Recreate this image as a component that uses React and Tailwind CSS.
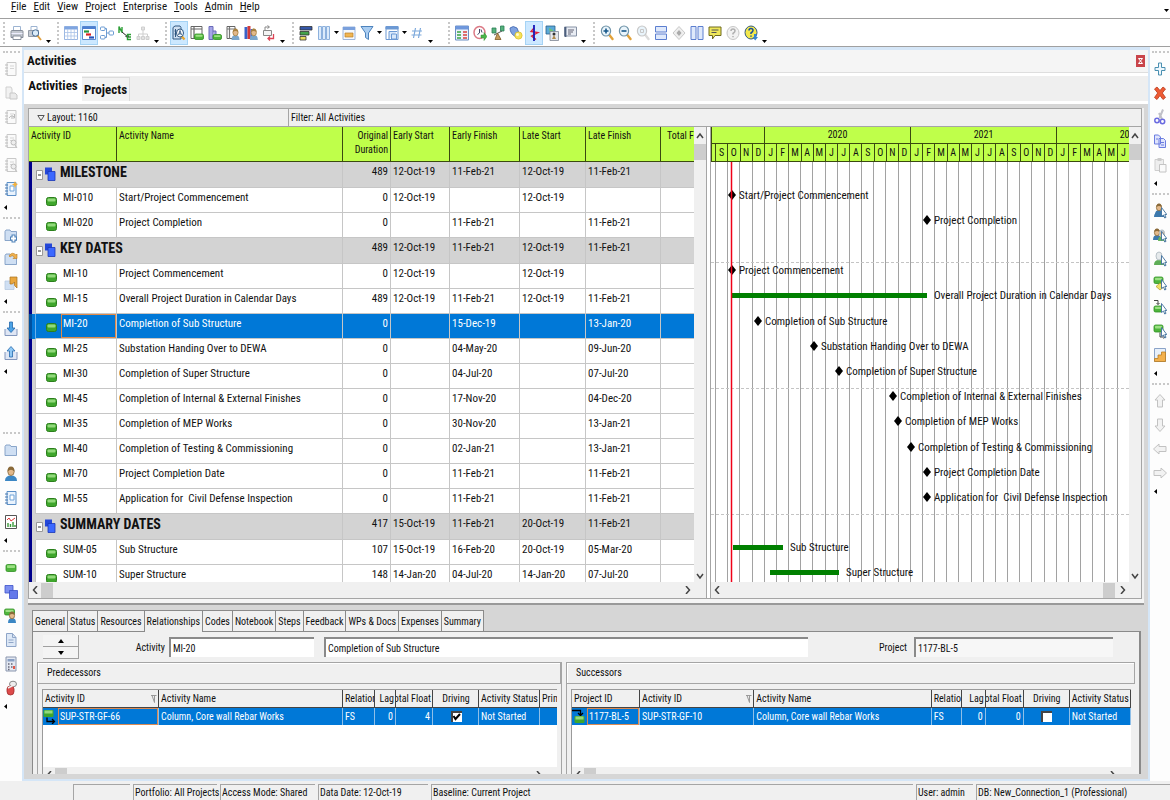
import React from "react";

/* ---------- icons, drawn on a 14x16 grid ---------- */
const page = (
  <g>
    <path d="M3 1.5h9v13H3z" fill="#fafafa" stroke="#c9c9c9" />
    <path d="M1 4h3M1 7h3M1 10h3M1 13h3" stroke="#bdbdbd" />
    <path d="M6 5h4M6 7.500h4" stroke="#d5d5d5" />
  </g>
);
const bluePage = (
  <g>
    <path d="M3 1.500h9v13H3z" fill="#eaf3fd" stroke="#5b8fc7" />
    <path d="M1 4h3M1 7h3M1 10h3M1 13h3" stroke="#4678b0" />
    <path d="M6 5h4v5H6z" fill="#fff" stroke="#6fa3d8" />
  </g>
);
const person = (x, y, c, hair = "#8a6a3a") => (
  <g>
    <path d={`M${x - 4} ${y + 10}q0-5 4-5t4 5z`} fill={c} />
    <ellipse cx={x} cy={y + 2.5} rx="2.600" ry="3.300" fill="#e3b98b" stroke={hair} strokeWidth=".8" />
    <path d={`M${x - 2.6} ${y + 2}q0-3.500 2.600-3.500t2.600 3.500q-2.600-2-5.200 0`} fill={hair} />
  </g>
);
const green = (x, y, w, h) => (
  <g>
    <rect x={x} y={y} width={w} height={h} rx="1.500" fill="#4fb53c" stroke="#2f8f22" strokeWidth=".8" />
    <rect x={x + 1} y={y + 0.8} width={w - 2} height={h / 2 - 0.8} rx=".8" fill="#9be083" />
  </g>
);
const cursor = <path d="M8.500 4.500v9l2-1.500 1.200 3 1.300-.6-1.200-2.900h2z" fill="#fff" stroke="#3f6f9c" strokeWidth=".9" />;
const folder = <path d="M1 4.500l1-1.500h4l1 1.500h5.500v9H1z" fill="#cfdff3" stroke="#7f9dc4" strokeWidth=".9" />;
const magnifier = (c) => (
  <g>
    <path d="M9 9.500l3.500 4.500" stroke={c === "#c8c8c8" ? "#dcdcdc" : "#e2a23a"} strokeWidth="2.400" strokeLinecap="round" />
    <ellipse cx="6" cy="6" rx="4.600" ry="5" fill="#e9f4fb" stroke={c} strokeWidth="1.200" />
  </g>
);
const bigArrow = (r) => (
  <path d="M7 1.500l5 5.500H9.500v7h-5V7H2z" fill="#f2f2f2" stroke="#c2c2c2" transform={`rotate(${r} 7 8)`} />
);

const ICONS = {
  print: (
    <g>
      <path d="M3.500 6V1.500h7V6" fill="#fff" stroke="#9db4d2" />
      <path d="M1 6.500q0-1 1-1h10q1 0 1 1v6H1z" fill="#c3c8d0" stroke="#7d8591" strokeWidth=".9" />
      <path d="M1.500 8.500h11" stroke="#eef" />
      <path d="M3 11h8v3.500H3z" fill="#fff" stroke="#7e8794" strokeWidth=".9" />
    </g>
  ),
  preview: (
    <g>
      <path d="M3 5V1.500h6V5" fill="#fff" stroke="#9db4d2" />
      <path d="M.5 5.500h10v6H.5z" fill="#c6cbd3" stroke="#8a929e" strokeWidth=".9" />
      <path d="M9 10l4 5" stroke="#e0a040" strokeWidth="2" />
      <circle cx="7.500" cy="8" r="3.200" fill="#dcecf8" stroke="#4d6f94" />
    </g>
  ),
  sheet: (
    <g>
      <path d="M.5 1.500h13v13H.5z" fill="#fff" stroke="#9bb7e2" />
      <path d="M.5 1.500h13v3H.5z" fill="#7fa5e0" />
      <path d="M.5 7.500h13M.5 11h13M3.700 4v11M7 4v11M10.300 4v11" stroke="#a9c3e9" strokeWidth=".8" />
    </g>
  ),
  gantt: (
    <g>
      <path d="M.5 1.500h13v13H.5z" fill="#fff" stroke="#5d8bd0" />
      <path d="M.5 1.500h13v2.500H.5z" fill="#4b7fd0" />
      <path d="M2 6.500h5" stroke="#27963c" strokeWidth="2.200" />
      <path d="M4 9.500h5" stroke="#d22" strokeWidth="2.200" />
      <path d="M7 12.500h5" stroke="#2753b8" strokeWidth="2.200" />
    </g>
  ),
  network: (
    <g fill="#fff" stroke="#6b9bd2">
      <path d="M4.500 3.500h2v9h-2M6.500 8h2.500" fill="none" />
      <rect x=".5" y="2" width="4.500" height="3.500" rx="1" />
      <rect x="9" y="6" width="4.500" height="4" rx="1" />
      <rect x=".5" y="10.500" width="4.500" height="3.500" rx="1" />
    </g>
  ),
  trace: (
    <g fill="none">
      <path d="M1 8V1.500l3 6V2" stroke="#2c9e35" strokeWidth="1.400" />
      <path d="M4 7l6 5M7.500 11.500l3 .8-.8-3" stroke="#222" />
      <path d="M13 9.500H9.500v5H13M13 12h-2" stroke="#2c9e35" strokeWidth="1.400" />
    </g>
  ),
  tree: (
    <g fill="#e2e2e2" stroke="#cfcfcf">
      <path d="M7 5v4M2.500 12V9h9v3M7 9v3" fill="none" />
      <path d="M5.500 2h3v3h-3zM1 11.500h3v3H1zM5.500 11.500h3v3h-3zM10 11.500h3v3h-3z" />
    </g>
  ),
  details: (
    <g>
      <path d="M1 2.500l2-1.500h5l1 1.500V14H1z" fill="#cfe0f2" stroke="#2f5680" />
      <path d="M3.500 4v8M2.500 6h2M2.500 9h2" stroke="#2f5680" />
      <path d="M9.500 11l3 3.500" stroke="#e9a52c" strokeWidth="2.200" />
      <ellipse cx="8" cy="8" rx="3.500" ry="4" fill="#fff" stroke="#2f5680" />
      <path d="M6.500 10L8 5.500l1.500 4.500M7 8.800h2" stroke="#2f5680" fill="none" strokeWidth=".9" />
    </g>
  ),
  usage: (
    <g>
      <path d="M1 1.500h11v12H1z" fill="#fff" stroke="#666" />
      <path d="M1 4h11M4 2v12" stroke="#666" strokeWidth="1.200" />
      {green(4.5, 9, 9, 5.5)}
    </g>
  ),
  profile: (
    <g>
      <path d="M1 1.500v13h4V1.500zM5 6h3v8" fill="#a5a5e8" stroke="#6a6ab8" />
      {green(5, 9.5, 8.500, 5)}
    </g>
  ),
  resUsage: (
    <g>
      <path d="M1 1.500h8v12H1z" fill="#fff" stroke="#666" />
      <path d="M1 4h9M3.500 2v12" stroke="#777" strokeWidth="1.200" />
      {person(9.5, 5, "#7aa6cc", "#a8813f")}
    </g>
  ),
  resProfile: (
    <g>
      <path d="M.5 2h3v12h-3z" fill="#3a62c8" />
      <path d="M3.500 1h3v13h-3z" fill="#d33a3a" />
      <path d="M6.500 4h2v10h-2z" fill="#3a62c8" />
      {person(9.8, 5, "#7aa6cc", "#a8813f")}
    </g>
  ),
  relation: (
    <g fill="none">
      <path d="M1.500 5.500h8v5h-8z" fill="#f4f4f4" stroke="#888" />
      <path d="M3 5.500V2h4M5.500 .5L7.500 2 5.500 3.500" stroke="#888" />
      <path d="M6 13.500h5.500V9M8 11.500l-2 2 2 2" stroke="#dd4455" strokeWidth="1.300" />
    </g>
  ),
  bars: (
    <g stroke="#333" strokeWidth=".8">
      <path d="M1 1.500h12v3.500H1z" fill="#3557a8" />
      <path d="M1 6.500h9V10H1z" fill="#45a34a" />
      <path d="M1 11.500h6V15H1z" fill="#e8dc5a" />
    </g>
  ),
  columns: (
    <g fill="#dcebfb" stroke="#8db1dd">
      <path d="M1.500 1.500h3v13h-3zM5.500 1.500h3v13h-3zM9.500 1.500h3v13h-3z" />
    </g>
  ),
  timescale: (
    <g>
      <path d="M1 2h12v12.500H1z" fill="#f4f8fd" stroke="#9db6dc" />
      <path d="M1 2h12v3H1z" fill="#7aa0dc" />
      <path d="M3 8h8v4H3z" fill="#f0b552" stroke="#b98028" strokeWidth=".7" />
    </g>
  ),
  filter: <path d="M1 1.500h12L8.500 8v6.500l-3-2V8z" fill="#a9cdf2" stroke="#4d83bd" />,
  group: (
    <g fill="#fff" stroke="#6c99d4">
      <path d="M1 1.500h12v13H1z" />
      <path d="M1 1.500h12v2.500H1z" fill="#6c99d4" />
      <path d="M4 14V6.500h8M6.500 9h5v5h-5z" fill="#d9e8fa" />
    </g>
  ),
  hash: <path d="M5.500 3l-2 10M10.500 3l-2 10M2 6h10M1.500 10h10" stroke="#7da9dc" strokeWidth="1.200" />,
  spreadsheet: (
    <g>
      <path d="M.5 1h13v14H.5z" fill="#edf3fb" stroke="#6b8fc4" />
      <path d="M.5 1h13v3.500H.5z" fill="#6e97dc" />
      <path d="M2 7h4M2 10h4M2 13h4" stroke="#38a545" strokeWidth="1.600" />
      <path d="M8 7h4M8 10h4M8 13h4" stroke="#d94242" strokeWidth="1.600" />
    </g>
  ),
  schedule: (
    <g>
      <ellipse cx="6.500" cy="7.500" rx="5.500" ry="6" fill="#fff" stroke="#dc7a86" strokeWidth="1.500" />
      <path d="M6.500 4v4l-2 1.500M8 4.500l1 3" stroke="#446" fill="none" />
      <path d="M8 10h3V7.500l3 4-3 4V13H8z" fill="#4bb54a" stroke="#2e8a2e" strokeWidth=".5" />
    </g>
  ),
  level: (
    <g>
      <path d="M1 3h4v5H1zM9.500 1h3.500v5H9.500z" fill="#55b27c" stroke="#2b7d55" strokeWidth=".8" />
      <path d="M3 10l8-4" stroke="#555" />
      <path d="M6.500 8L4 14.500h6z" fill="#c79a5a" stroke="#7f5b26" strokeWidth=".8" />
    </g>
  ),
  progress: (
    <g>
      <path d="M1 3q3-3 7 0l2 5-3 4Q1 9 1 3z" fill="#7ea2e0" stroke="#3c62ac" strokeWidth=".8" />
      <circle cx="9.500" cy="10.500" r="3.600" fill="#f7e25a" stroke="#d9c12b" strokeWidth=".8" />
      <circle cx="8.500" cy="9.500" r="1.500" fill="#fffbd0" />
    </g>
  ),
  progressLine: (
    <g fill="none">
      <path d="M7 3L4 6.500l7 1L4.500 11l4.500 3.500" stroke="#e0203a" strokeWidth="1.300" />
      <path d="M7 0v16" stroke="#1616b8" strokeWidth="1.800" />
    </g>
  ),
  apply: (
    <g>
      <path d="M1 1h9v8H1z" fill="#5aa9d8" stroke="#28608c" strokeWidth=".8" />
      <path d="M4 3l5 3-4 2z" fill="#72c36a" />
      <path d="M5 6.500h8.500v9H5z" fill="#e4e7ec" stroke="#7d8794" strokeWidth=".8" />
      <circle cx="9" cy="9" r="1.500" fill="#333" />
      <path d="M7 14l2-4 2 4z" fill="#b18a4c" />
    </g>
  ),
  summarize: (
    <g>
      <path d="M1.500 2h12v9h-12z" fill="#e8ecf3" stroke="#8792a5" />
      <path d="M2.500 2v10" stroke="#4d5f7d" strokeWidth="1.800" />
      <path d="M5 5h6M5 7h5M5 9h3" stroke="#556" strokeWidth=".9" />
    </g>
  ),
  zoomIn: <g>{magnifier("#6f93a8")}<path d="M3.500 6h5M6 3.500v5" stroke="#15578a" strokeWidth="1.600" /></g>,
  zoomOut: <g>{magnifier("#6f93a8")}<path d="M3.500 6h5" stroke="#15578a" strokeWidth="1.600" /></g>,
  zoomFit: <g>{magnifier("#c8c8c8")}<path d="M4.500 4.500h3v3h-3z" fill="none" stroke="#c8c8c8" /></g>,
  splitH: <g fill="#dfe9fb" stroke="#5c7fd0"><path d="M1.500 1.500h11V7h-11zM1.500 9h11v5.500h-11z" /></g>,
  diamond: (
    <g>
      <path d="M7 1.500l6 6.500-6 6.500L1 8z" fill="#eee" stroke="#c8c8c8" />
      <path d="M7 5l2.500 3L7 11 4.500 8z" fill="#aaa" />
    </g>
  ),
  splitV: <g fill="#dfe9fb" stroke="#5c7fd0"><path d="M1 1.500h5v13H1zM8 1.500h5v13H8z" /></g>,
  comment: (
    <g>
      <path d="M1 2h12v8.500H7L4.500 14v-3.500H1z" fill="#efe75a" stroke="#6f6a1e" />
      <path d="M3.500 5h7M3.500 7.500h5" stroke="#555" />
    </g>
  ),
  help: (
    <g fill="none">
      <ellipse cx="7" cy="8" rx="6" ry="6.500" fill="#f2f2f2" stroke="#c6c6c6" />
      <path d="M5 6q0-2 2-2t2 2q0 1.200-2 2.500v1M7 11v1.300" stroke="#b0b0b0" strokeWidth="1.500" />
    </g>
  ),
  helpOn: (
    <g fill="none">
      <ellipse cx="7" cy="7.500" rx="6" ry="6.500" fill="#f3e84c" stroke="#345a7c" />
      <path d="M5 5.500q0-2 2-2t2 2q0 1.200-2 2.500v1M7 10.500v1.300" stroke="#1a4f9c" strokeWidth="1.500" />
      <path d="M10 9v3H8.500l2.700 3.500L14 12h-1.500V9z" fill="#3a85cf" />
    </g>
  ),
  page,
  pageGo: <g>{page}<path d="M5 9q3-4 5-1M10.500 5v4H7" fill="none" stroke="#bbb" /></g>,
  pageFind: <g>{page}<circle cx="9.500" cy="9.500" r="2.500" fill="#eee" stroke="#bbb" /><path d="M11 12l2 3" stroke="#bbb" /></g>,
  pageStack: <g><path d="M2 2h5l1 2v9H2z" fill="#f2f2f2" stroke="#d0d0d0" /><path d="M6 8h5l2 2v4H6z" fill="#eaeaea" stroke="#c8c8c8" /></g>,
  pageNew: <g>{bluePage}<path d="M11 0l1 2.500 2 .5-2 1.500L11 7l-1-2.500L8 3.500l2-1z" fill="#f4b13c" /></g>,
  bluePage,
  folder,
  folderNew: <g>{folder}<path d="M9.500 7.500v8M6 11.500h7" stroke="#4f83ba" strokeWidth="4" /><path d="M9.500 8.500v6M7 11.500h5" stroke="#fff" strokeWidth="1.800" /></g>,
  folderOpen: <g>{folder}<path d="M5 5q3-5 7-1l1-1v4.500H9l1.500-1.500Q8 3.500 6 6z" fill="#f1b04a" stroke="#b97a1e" strokeWidth=".6" /></g>,
  folderExit: <g><path d="M1 6h9v8.500H1z" fill="#cfdff3" stroke="#b5c8e0" strokeWidth=".8" /><path d="M6 2h7v11l-2.500-2.500V7L8.500 9H6z" fill="#e9a63e" stroke="#a8701c" strokeWidth=".7" /></g>,
  importIn: <g><path d="M1 8v6.500h12V8" fill="#dfe6f4" stroke="#8296bc" /><path d="M5.500 1h3v6h2.500L7 11.500 3 7h2.500z" fill="#4da3e6" stroke="#2468ac" strokeWidth=".8" /></g>,
  exportOut: <g><path d="M1 7v7.500h12V7" fill="#dfe6f4" stroke="#8296bc" /><path d="M5.500 12h3V6h2.500L7 1.500 3 6h2.500z" fill="#8fc8f5" stroke="#2468ac" strokeWidth=".8" /></g>,
  user: <g><path d="M1 15q0-5.500 6-5.500t6 5.500z" fill="#3c87c4" /><ellipse cx="7" cy="5.500" rx="3.200" ry="4" fill="#e3b98b" stroke="#8a6a3a" strokeWidth=".8" /><path d="M3.600 5.500Q3.500.5 7 .5t3.400 5Q7 2 3.600 5.500" fill="#8a6a3a" /></g>,
  chart: <g><path d="M1.500 1.500h11v13h-11z" fill="#fff" stroke="#555" /><path d="M3 6l2-2 2 3 4-3" fill="none" stroke="#d33" /><path d="M4 13V9M6.500 13v-3M9 13V8M11 13v-2" stroke="#3a9a3a" strokeWidth="1.400" /></g>,
  activity: green(2, 4.5, 10, 7),
  wbs: <g stroke="#3a50c8" strokeWidth=".8"><path d="M1 1.500h8V9H1z" fill="#7d8ff0" /><path d="M5.500 6.500h8v8h-8z" fill="#6378ea" /></g>,
  assign: <g>{green(0.5, 1, 10, 6)}{person(8, 5, "#3c87c4")}</g>,
  doc: <g><path d="M2.500 1.500h6l3.500 4v9H2.500z" fill="#dde8f6" stroke="#8ea5c8" /><path d="M8.500 1.500v4H12M4.500 8h5M4.500 10.500h5" fill="none" stroke="#90a6c8" /></g>,
  calc: <g><path d="M2 1h10v14H2z" fill="#e4e9f2" stroke="#8a96ae" /><path d="M3.500 3h7v2.500h-7z" fill="#8aa0c4" /><path d="M4 8h1.500M7 8h1.500M4 11h1.500M7 11h1.500M4 13.500h1.500" stroke="#667" strokeWidth="1.300" /><path d="M9 10h2v3H9z" fill="#e25a4a" /></g>,
  risk: <g><ellipse cx="9" cy="4" rx="3.500" ry="2.800" fill="#eee" stroke="#888" /><path d="M3 9q0-3 3.500-3T10 9v2.500Q10 15 6.500 15T3 11.500z" fill="#dd4b4b" stroke="#a02c2c" strokeWidth=".8" /><path d="M4 8l6-3" stroke="#eee" strokeWidth="1.400" /></g>,
  plus: <path d="M5.500 2h3v4.500H12v3H8.500V14h-3V9.500H2v-3h3.500z" fill="#eef7fd" stroke="#4a8fb0" />,
  remove: <path d="M4 2L7 5.500 10 2l2.500 2L9.300 8l3.200 4.500L10 14.500l-3-4-3 4-2.500-2L4.700 8 1.500 4z" fill="#ee5b34" stroke="#b8371a" strokeWidth=".8" />,
  cut: <g fill="none"><path d="M10 .5L6.500 9M6 4l3 6" stroke="#c0c0c8" strokeWidth="2" /><circle cx="4" cy="11.500" r="2.200" stroke="#6a6ae0" strokeWidth="1.500" /><circle cx="9.500" cy="12.500" r="2.200" stroke="#6a6ae0" strokeWidth="1.500" /></g>,
  copy: <g fill="#dfe4fc" stroke="#6b7de0"><path d="M1.500 2h4l2 2v7h-6zM6 5.500h4.500l2 2v7H6z" /><path d="M3 6h2M8 9.500h3M8 12h3" /></g>,
  paste: <g><path d="M2 2.500h8.500v11H2z" fill="#eee" stroke="#cfcfcf" /><path d="M4.500 1h4v3h-4z" fill="#ccc" /><path d="M6.500 7.500H13V15H6.500z" fill="#fafafa" stroke="#c4c4c4" /></g>,
  userPick: <g><path d="M1 14q0-5 5-5t6 5z" fill="#3c78ac" />{person(6, 2, "#3c78ac")}{cursor}</g>,
  usersPick: <g>{person(4, 3, "#3c78ac")}{person(9, 4, "#69b45c", "#b8c4cc")}{cursor}</g>,
  rolePick: <g><path d="M1 14q0-5 5-5t6 5z" fill="#5fae57" /><ellipse cx="6" cy="5" rx="3" ry="4" fill="#e6eaec" stroke="#b8c2c8" />{cursor}</g>,
  actPick: <g>{green(1, 2, 9, 6.5)}<path d="M7 8l4.500 3.500L7 15l-4-3.500z" fill="#f2e067" stroke="#b09a28" strokeWidth=".7" />{cursor}</g>,
  predPick: <g><path d="M1 1.500h4v4M3.500 4L5 5.500 6.500 4" fill="none" stroke="#444" />{green(1, 7, 8, 6)}{cursor}</g>,
  succPick: <g>{green(1, 2, 9, 7)}<path d="M7 9.500V14h5M10.500 12.500L12 14l-1.500 1.500" fill="none" stroke="#444" />{cursor}</g>,
  steps: <g><path d="M1.500 1.500h11v13h-11z" fill="#e8f0fa" stroke="#8aa3c8" /><path d="M1.500 14.500v-3h3.500V8h3.500V5h4v9.500z" fill="#f3b04c" stroke="#b97d22" strokeWidth=".8" /></g>,
  up: bigArrow(0),
  down: bigArrow(180),
  left: bigArrow(-90),
  right: bigArrow(90),
};

function Icon({ name }) {
  return (
    <svg width="14" height="16" viewBox="0 0 14 16" fill="none" aria-hidden="true">
      {ICONS[name]}
    </svg>
  );
}

function ToolButton({ name, active }) {
  return (
    <button
      type="button"
      aria-label={name}
      className={
        "flex h-6 w-[18px] shrink-0 items-center justify-center " +
        (active ? "border border-[#a5d3f5] bg-[#cce8ff]" : "")
      }
    >
      <Icon name={name} />
    </button>
  );
}

function Caret({ low }) {
  return (
    <button type="button" aria-label="More options" className={"flex h-5 w-2 shrink-0 justify-center " + (low ? "items-end" : "-ml-px items-center")}>
      <svg width="5" height="3" viewBox="0 0 5 3" aria-hidden="true"><path d="M0 0h5L2.500 3z" fill="#000" /></svg>
    </button>
  );
}

const TOOL_GROUPS = [
  { box: "w-[54px]", items: ["print", "preview", "..."] },
  { box: "w-[108px]", items: ["sheet", "*gantt", "network", "trace", "tree", "..."] },
  { box: "w-[127px]", items: ["*details", "usage", "profile", "resUsage", "resProfile", "relation", "..."] },
  { box: "w-[156px]", items: ["bars", "columns", "v", "timescale", "filter", "v", "group", "v", "hash", "..."] },
  { box: "w-[145px]", items: ["spreadsheet", "schedule", "level", "progress", "*progressLine", "apply", "summarize", "..."] },
  { box: "w-[180px]", items: ["zoomIn", "zoomOut", "zoomFit", "splitH", "diamond", "splitV", "comment", "help", "helpOn", "..."] },
];

function Toolbar() {
  return (
    <div className="flex h-7 shrink-0 items-center border-b border-[#a0a0a0] bg-white pl-[3px]">
      {TOOL_GROUPS.map((g, i) => (
        <div key={i} className={"flex shrink-0 items-center " + g.box}>
          <span className="mr-[3px] h-[22px] border-l-2 border-dotted border-[#c8c8c8]" />
          {g.items.map((n, k) =>
            n === "..." ? <Caret key={k} low /> : n === "v" ? <Caret key={k} /> : (
              <ToolButton key={k} name={n.replace("*", "")} active={n[0] === "*"} />
            )
          )}
        </div>
      ))}
    </div>
  );
}

function Rail({ groups, width }) {
  return (
    <div className={"flex shrink-0 flex-col bg-[#fdfdfd] " + width}>
      {groups.map((g, i) => (
        <div key={i} className={"flex flex-col items-center " + (g.gap ? "mt-[51px]" : "")}>
          <span className="flex h-[10px] w-[17px] items-center"><i className="w-full border-t-2 border-dotted border-[#c8c8c8]" /></span>
          {g.items.map((n, k) => (
            <button key={k} type="button" aria-label={n} className="flex h-6 w-[18px] items-center justify-center"><Icon name={n} /></button>
          ))}
          <span className="flex h-3 w-full items-center pl-1">
            <svg width="3" height="5" viewBox="0 0 3 5" aria-hidden="true"><path d="M3 0v5L0 2.500z" fill="#000" /></svg>
          </span>
        </div>
      ))}
    </div>
  );
}

const LEFT = [
  { items: ["page", "pageStack", "pageGo", "pageFind", "pageFind", "pageNew"] },
  { items: ["folderNew", "folderOpen", "folderExit"] },
  { items: ["importIn", "exportOut"] },
  { gap: true, items: ["folder", "user", "bluePage", "chart"] },
  { items: ["activity", "wbs", "assign", "doc", "calc", "risk"] },
];
const RIGHT = [
  { items: ["plus", "remove", "cut", "copy", "paste"] },
  { items: ["userPick", "usersPick", "rolePick", "actPick", "predPick", "succPick", "steps"] },
  { items: ["up", "down", "left", "right"] },
];

/* ---------- scroll bars ---------- */
const CHEVRON = { up: "M1 6l3-4 3 4", down: "M1 2l3 4 3-4", left: "M6 0L2.500 4 6 8", right: "M2 0l3.500 4L2 8" };
function ScrollArrow({ dir }) {
  return (
    <button type="button" aria-label={"Scroll " + dir} className="flex size-3 shrink-0 items-center justify-center">
      <svg width="8" height="8" viewBox="0 0 8 8" fill="none" stroke="#444" strokeWidth="1.500" aria-hidden="true"><path d={CHEVRON[dir]} /></svg>
    </button>
  );
}
function VScroll() {
  return (
    <div className="flex w-3 shrink-0 flex-col items-center bg-[#f0f0f0] pt-[3px]">
      <ScrollArrow dir="up" />
      <span className="mt-[2px] h-4 w-full bg-[#cdcdcd]" />
      <span className="flex-1" />
      <ScrollArrow dir="down" />
    </div>
  );
}
function HScroll({ end }) {
  return (
    <div className="flex h-4 shrink-0 items-center bg-[#f0f0f0] pr-3">
      <ScrollArrow dir="left" />
      {end && <span className="flex-1" />}
      <span className={"h-[15px] w-3 bg-[#cdcdcd] " + (end ? "mr-[2px]" : "")} />
      {!end && <span className="flex-1" />}
      <ScrollArrow dir="right" />
    </div>
  );
}

/* ---------- activity table ---------- */
const ROWS = [
  { group: "MILESTONE", v: ["489", "12-Oct-19", "11-Feb-21", "12-Oct-19", "11-Feb-21"] },
  { id: "MI-010", name: "Start/Project Commencement", v: ["0", "12-Oct-19", "", "12-Oct-19", ""] },
  { id: "MI-020", name: "Project Completion", v: ["0", "", "11-Feb-21", "", "11-Feb-21"] },
  { group: "KEY DATES", v: ["489", "12-Oct-19", "11-Feb-21", "12-Oct-19", "11-Feb-21"] },
  { id: "MI-10", name: "Project Commencement", v: ["0", "12-Oct-19", "", "12-Oct-19", ""] },
  { id: "MI-15", name: "Overall Project Duration in Calendar Days", v: ["489", "12-Oct-19", "11-Feb-21", "12-Oct-19", "11-Feb-21"] },
  { id: "MI-20", name: "Completion of Sub Structure", v: ["0", "", "15-Dec-19", "", "13-Jan-20"], sel: true },
  { id: "MI-25", name: "Substation Handing Over to DEWA", v: ["0", "", "04-May-20", "", "09-Jun-20"] },
  { id: "MI-30", name: "Completion of Super Structure", v: ["0", "", "04-Jul-20", "", "07-Jul-20"] },
  { id: "MI-45", name: "Completion of Internal & External Finishes", v: ["0", "", "17-Nov-20", "", "04-Dec-20"] },
  { id: "MI-35", name: "Completion of MEP Works", v: ["0", "", "30-Nov-20", "", "13-Jan-21"] },
  { id: "MI-40", name: "Completion of Testing & Commissioning", v: ["0", "", "02-Jan-21", "", "13-Jan-21"] },
  { id: "MI-70", name: "Project Completion Date", v: ["0", "", "11-Feb-21", "", "11-Feb-21"] },
  { id: "MI-55", name: "Application for  Civil Defense Inspection", v: ["0", "", "11-Feb-21", "", "11-Feb-21"] },
  { group: "SUMMARY DATES", v: ["417", "15-Oct-19", "11-Feb-21", "20-Oct-19", "11-Feb-21"] },
  { id: "SUM-05", name: "Sub Structure", v: ["107", "15-Oct-19", "16-Feb-20", "20-Oct-19", "05-Mar-20"] },
  { id: "SUM-10", name: "Super Structure", v: ["148", "14-Jan-20", "04-Jul-20", "14-Jan-20", "07-Jul-20"] },
];

function ActivityTable() {
  return (
    <table className="w-[707px] table-fixed border-separate border-spacing-0">
      <colgroup>
        <col className="w-[7px]" /><col className="w-[25px]" /><col className="w-[56px]" /><col className="w-[226px]" />
        <col className="w-[48px]" /><col className="w-[59px]" /><col className="w-[70px]" /><col className="w-[66px]" />
        <col className="w-[75px]" /><col className="w-[75px]" />
      </colgroup>
      <thead>
        <tr className="h-[35px] bg-[#bfff4a] align-top text-[10px] leading-[14px] [&>th]:border-b [&>th]:border-r [&>th]:border-[#3a4a10] [&>th]:px-[2px] [&>th]:pt-[2px] [&>th]:text-left [&>th]:font-normal">
          <th colSpan={3}>Activity ID</th>
          <th>Activity Name</th>
          <th><span className="block text-right">Original Duration</span></th>
          <th>Early Start</th>
          <th>Early Finish</th>
          <th>Late Start</th>
          <th>Late Finish</th>
          <th><span className="pl-1">Total Float</span></th>
        </tr>
      </thead>
      <tbody className="whitespace-nowrap text-[11px] leading-4">
        {ROWS.map((r) => {
          const line = "border-r border-b border-[#c6c6c6] ";
          const vals = r.v.map((t, i) => (
            <td key={i} className={line + "px-[2px] pb-[5px] " + (i === 0 ? "text-right" : "")}>{t}</td>
          ));
          if (r.group)
            return (
              <tr key={r.group} className="h-[26px] bg-[#d3d3d3]">
                <td className="border-l-[3px] border-[#00008b]" />
                <td colSpan={3} className={line + "overflow-hidden pb-[5px]"}>
                  <span className="flex items-center text-[14px] font-bold">
                    <span className="flex items-center pt-1">
                      <svg width="24" height="14" viewBox="0 0 24 14" aria-hidden="true">
                        <path d="M.5 3.500h6v9h-6z" fill="#fff" stroke="#999" />
                        <path d="M2 8h3" stroke="#333" />
                        <path d="M9 .5h7v7H9z" fill="#2447d8" />
                        <path d="M12 4.500h7v9h-7z" fill="#3b68ff" stroke="#1a36b5" strokeWidth=".8" />
                      </svg>
                    </span>
                    {r.group}
                  </span>
                </td>
                {vals}
                <td className={line} />
              </tr>
            );
          return (
            <tr key={r.id} className={"h-[25px] " + (r.sel ? "bg-[#0078d7] text-white" : "bg-white")}>
              <td className={"border-l-[3px] border-r " + (r.sel ? "border-l-[#00509f] border-r-[#6bb0ea]" : "border-l-[#00008b] border-r-[#c6c6c6] bg-[#d3d3d3]")} />
              <td className="border-b border-[#c6c6c6]">
                <svg className="ml-[10px] mt-[3px]" width="11" height="9" viewBox="0 0 11 9" aria-hidden="true">
                  <rect x=".5" y=".5" width="10" height="8" rx="2" fill="#3fa62c" stroke="#2b7f1c" />
                  <rect x="1.500" y="1.500" width="8" height="3" rx="1" fill="#93d97c" />
                </svg>
              </td>
              <td className={line + "px-[2px] pb-[5px] " + (r.sel ? "shadow-[inset_0_0_0_1px_#e08a4a]" : "")}>{r.id}</td>
              <td className={line + "overflow-hidden whitespace-pre px-[2px] pb-[5px]"}>{r.name}</td>
              {vals}
              <td className={line} />
            </tr>
          );
        })}
      </tbody>
    </table>
  );
}

/* ---------- gantt ---------- */
const YEARS = [
  { label: "", months: "SOND", first: true },
  { label: "2020", months: "JFMAMJJASOND" },
  { label: "2021", months: "JFMAMJJASOND" },
  { label: "2022", months: "JFMAMJJASOND" },
];
const MARKS = [
  [21, 33, "Start/Project Commencement"],
  [216, 58, "Project Completion"],
  [21, 108, "Project Commencement"],
  [47, 159, "Completion of Sub Structure"],
  [103, 184, "Substation Handing Over to DEWA"],
  [128, 209, "Completion of Super Structure"],
  [182, 234, "Completion of Internal & External Finishes"],
  [187, 259, "Completion of MEP Works"],
  [200, 285, "Completion of Testing & Commissioning"],
  [216, 310, "Project Completion Date"],
  [216, 335, "Application for  Civil Defense Inspection"],
];
const BARS = [
  [21, 216, 133, "Overall Project Duration in Calendar Days"],
  [22, 72, 385, "Sub Structure"],
  [59, 128, 410, "Super Structure"],
];

function Gantt() {
  return (
    <div className="min-w-0 flex-1 overflow-hidden bg-white">
      <div className="flex h-[35px] border-l border-b border-[#3a4a10] bg-[#bfff4a] text-[10px]">
        {YEARS.map((y, i) => (
          <div key={i} className={"flex shrink-0 flex-col border-r border-[#3a4a10] " + (y.first ? "w-[53px]" : "w-[146px]")}>
            <div className="h-[17px] border-b border-[#3a4a10] text-center leading-[15px]">{y.label}</div>
            <div className="flex flex-1">
              {y.first && <span className="w-1 shrink-0 border-r border-[#3a4a10]" />}
              {y.months.split("").map((m, k) => (
                <span key={k} className={"flex-1 text-center leading-[17px] " + (k < y.months.length - 1 ? "border-r border-[#3a4a10]" : "")}>{m}</span>
              ))}
            </div>
          </div>
        ))}
      </div>
      <svg width="560" height="430" className="max-w-none text-[11px]" fill="#111">
        {Array.from({ length: 46 }, (_, k) => (
          <path key={k} d={`M${Math.round(4 + k * 12.17) + 0.5} 0v430`} stroke="#a2a2a2" />
        ))}
        {[100, 226, 352].map((y) => (
          <path key={y} d={`M0 ${y}.5h560`} stroke="#c4c4c4" strokeDasharray="3 2" />
        ))}
        {MARKS.map(([x, y, t]) => (
          <g key={t}>
            <path d={`M${x} ${y - 5}l4 5-4 5-4-5z`} fill="#000" />
            <text x={x + 7} y={y + 4} className="whitespace-pre">{t}</text>
          </g>
        ))}
        {BARS.map(([a, b, y, t]) => (
          <g key={t}>
            <rect x={a} y={y - 2} width={b - a} height="5" fill="#008000" />
            <text x={b + 7} y={y + 4}>{t}</text>
          </g>
        ))}
        <path d="M20.500 0v430" stroke="#f00018" strokeWidth="1.500" />
      </svg>
    </div>
  );
}

/* ---------- detail tables ---------- */
const LINK_ICON = {
  pred: (
    <svg width="13" height="15" viewBox="0 0 13 15" aria-hidden="true">
      <rect x=".5" y="1" width="10" height="7" rx="1" fill="#3fa62c" /><rect x="1.500" y="1.500" width="8" height="3" fill="#93d97c" />
      <path d="M4 8.500v4h7M9 10l2.500 2.500L9 15" fill="none" stroke="#000" strokeWidth="1.300" />
    </svg>
  ),
  succ: (
    <svg width="13" height="15" viewBox="0 0 13 15" aria-hidden="true">
      <path d="M0 1.500h8.500V6M6 4l2.500 2.500L11 4" fill="none" stroke="#000" strokeWidth="1.300" />
      <rect x="2.500" y="7" width="10" height="7" rx="1" fill="#3fa62c" /><rect x="3.500" y="7.500" width="8" height="3" fill="#93d97c" />
    </svg>
  ),
};

function RelationTable({ title, kind, cols, box }) {
  return (
    <section className={"flex flex-col overflow-hidden border-l border-t border-[#a5a5a5] " + box}>
      <h2 className="h-[21px] shrink-0 border-b border-r border-[#a5a5a5] pl-[9px] text-[10px] leading-[20px] font-normal shadow-[inset_1px_1px_0_#fff]">{title}</h2>
      <div className="ml-1 mr-[4px] mt-[5px] flex flex-1 flex-col overflow-hidden border-l border-t border-[#9a9a9a] bg-white">
        <div className="flex-1 overflow-hidden">
          <table className="w-full table-fixed border-separate border-spacing-0 text-[10px] leading-4">
            <colgroup>
              <col className="w-[15px]" />
              {cols.map((c, i) => <col key={i} className={c.w} />)}
            </colgroup>
            <thead>
              <tr className="h-[18px] bg-[#f0f0f0]">
                {cols.map((c, i) => (
                  <th key={i} colSpan={i === 0 ? 2 : 1} className={"overflow-hidden whitespace-nowrap border-b border-r border-[#444] pl-[2px] pr-px font-normal " + (c.align || "text-left")}>
                    <span className={"flex items-center " + (c.sort ? "justify-between" : c.align === "text-right" ? "justify-end" : c.align === "text-center" ? "justify-center" : "")}>
                      {c.h}
                      {c.sort && <svg width="6" height="8" viewBox="0 0 6 8" fill="none" stroke="#999" aria-hidden="true"><path d="M0 .5h5.500M1 .5L3.500 7.500V1" /></svg>}
                    </span>
                  </th>
                ))}
              </tr>
            </thead>
            <tbody>
              <tr className="h-[17px] bg-[#0078d7] text-white">
                <td>{LINK_ICON[kind]}</td>
                {cols.map((c, i) => (
                  <td key={i} className={"overflow-hidden whitespace-nowrap border-r border-[#8fbfe8] px-[2px] " + (i === 0 ? "shadow-[inset_0_0_0_1px_#d98a55] " : "") + (c.align || "")}>
                    {c.check !== undefined ? (
                      <label className="flex items-center justify-center">
                        <input type="checkbox" defaultChecked={c.check} aria-label="Driving" className="peer size-[11px] appearance-none border-l-2 border-t-2 border-[#444] bg-white" />
                        <svg className="pointer-events-none -ml-[10px] hidden peer-checked:block" width="9" height="11" viewBox="0 0 9 11" fill="none" stroke="#000" strokeWidth="2" aria-hidden="true"><path d="M1.500 5l2 3L8 3" /></svg>
                      </label>
                    ) : c.v}
                  </td>
                ))}
              </tr>
            </tbody>
          </table>
        </div>
        <div className="h-[7px] shrink-0 overflow-hidden"><HScroll /></div>
      </div>
    </section>
  );
}

const PRED = [
  { h: "Activity ID", v: "SUP-STR-GF-66", w: "w-[101px]", sort: true },
  { h: "Activity Name", v: "Column, Core wall Rebar Works", w: "w-[184px]" },
  { h: "Relatior", v: "FS", w: "w-[32px]" },
  { h: "Lag", v: "0", w: "w-[21px]", align: "text-right" },
  { h: "otal Float", v: "4", w: "w-[37px]", align: "text-right" },
  { h: "Driving", check: true, w: "w-[46px]", align: "text-center" },
  { h: "Activity Status", v: "Not Started", w: "w-[61px]" },
  { h: "Prim", v: "", w: "w-[19px]" },
];
const SUCC = [
  { h: "Project ID", v: "1177-BL-5", w: "w-[53px]" },
  { h: "Activity ID", v: "SUP-STR-GF-10", w: "w-[114px]", sort: true },
  { h: "Activity Name", v: "Column, Core wall Rebar Works", w: "w-[177px]" },
  { h: "Relatio", v: "FS", w: "w-[30px]" },
  { h: "Lag", v: "0", w: "w-[24px]", align: "text-right" },
  { h: "otal Float", v: "0", w: "w-[38px]", align: "text-right" },
  { h: "Driving", check: false, w: "w-[46px]", align: "text-center" },
  { h: "Activity Status", v: "Not Started", w: "w-[61px]" },
];

const TABS = ["General", "Status", "Resources", "Relationships", "Codes", "Notebook", "Steps", "Feedback", "WPs & Docs", "Expenses", "Summary"];

function Details() {
  const field = "h-5 border-l-2 border-t-2 border-[#8a8a8a] px-[2px] text-[10px] outline-none ";
  return (
    <div className="shrink-0 bg-[#d6d6d6] pl-1 pr-[3px] pt-[5px]">
      <div role="tablist" className="flex h-[21px] border-l border-[#8a8a8a] text-[10px]">
        {TABS.map((t) => {
          const on = t === "Relationships";
          return (
            <button key={t} type="button" role="tab" aria-selected={on} className={"border-r border-t border-[#8a8a8a] bg-[#f0f0f0] px-[2px] whitespace-nowrap " + (on ? "h-[22px]" : "h-[21px]")}>{t}</button>
          );
        })}
      </div>
      <div className="flex h-[143px] flex-col overflow-hidden border-l border-r-2 border-t border-[#8a8a8a] bg-[#f0f0f0]">
        <div className="flex h-[30px] shrink-0 items-center pl-[10px] pr-[26px] text-[10px]">
          <div className="flex w-9 flex-col">
            {["M0 4h6L3 0z", "M0 0h6L3 4z"].map((d, i) => (
              <button key={i} type="button" aria-label={i ? "Next activity" : "Previous activity"} className="flex h-3 items-center justify-center border-b border-r border-[#a0a0a0] bg-[#f4f4f4]">
                <svg width="6" height="4" viewBox="0 0 6 4" aria-hidden="true"><path d={d} fill="#000" /></svg>
              </button>
            ))}
          </div>
          <label htmlFor="act" className="w-[90px] pr-1 text-right">Activity</label>
          <input id="act" defaultValue="MI-20" className={field + "w-[145px] bg-white"} />
          <input aria-label="Activity name" defaultValue="Completion of Sub Structure" className={field + "ml-[10px] min-w-0 flex-1 bg-white"} />
          <label htmlFor="prj" className="w-[106px] pr-[7px] text-right">Project</label>
          <input id="prj" defaultValue="1177-BL-5" readOnly className={field + "w-[199px] bg-[#f7f7f7]"} />
        </div>
        <div className="flex min-h-0 flex-1 gap-1 pl-1 pr-1">
          <RelationTable title="Predecessors" kind="pred" cols={PRED} box="w-[525px] shrink-0 border-r" />
          <RelationTable title="Successors" kind="succ" cols={SUCC} box="min-w-0 flex-1" />
        </div>
      </div>
      <div className="h-[5px]" />
    </div>
  );
}

const STATUS = [
  ["", "w-[57px]"], ["Portfolio: All Projects", "w-[84px]"], ["Access Mode: Shared", "w-[95px]"],
  ["Data Date: 12-Oct-19", "w-[110px]"], ["Baseline: Current Project", "flex-1"], ["User: admin", "w-[57px]"],
  ["DB: New_Connection_1 (Professional)", "w-[194px]"],
];

export default function App() {
  return (
    <div className="flex h-screen min-h-[800px] w-full flex-col overflow-hidden bg-white font-['Roboto_Condensed','Liberation_Sans_Narrow','Arial_Narrow',sans-serif] text-[#111]">
      <nav className="flex h-[19px] shrink-0 items-start justify-between border-b border-[#a0a0a0] text-[11px] leading-[14px]">
        <div className="flex gap-[7px] pl-[11px]">
          {["File", "Edit", "View", "Project", "Enterprise", "Tools", "Admin", "Help"].map((m) => (
            <a key={m} href="#menu"><u>{m[0]}</u>{m.slice(1)}</a>
          ))}
        </div>
        <Caret />
      </nav>
      <Toolbar />
      <div className="flex min-h-0 flex-1">
        <Rail groups={LEFT} width="w-[22px]" />
        <main className="flex min-w-0 flex-1 flex-col border-x-2 border-t-[3px] border-b-2 border-[#d5e6f7]">
          <div className="flex h-[23px] shrink-0 items-center justify-between border-b border-[#dedede] bg-[#f5f5f5] px-[3px]">
            <h1 className="text-[13px] font-bold">Activities</h1>
            <button type="button" aria-label="Close" className="flex h-3 w-[9px] items-center justify-center bg-[#c9444a]">
              <svg width="5" height="6" viewBox="0 0 5 6" stroke="#fff" aria-hidden="true"><path d="M.5 .5l4 5M4.500 .5l-4 5M.5 .5h4M.5 5.500h4" /></svg>
            </button>
          </div>
          <div className="flex h-[31px] shrink-0 items-end border-y-[3px] border-white bg-[#efefef] text-[13px] font-bold">
            <button type="button" className="h-[27px] w-[58px] bg-white pb-1">Activities</button>
            <button type="button" className="h-6 w-12 border-r border-t border-[#dcdcdc] bg-[#f2f2f2]">Projects</button>
          </div>
          <div className="flex min-h-0 flex-1 flex-col border-x-4 border-t-4 border-[#d6d6d6] bg-[#f0f0f0]">
            <div className="mr-[2px] flex h-[19px] shrink-0 items-center border border-[#a5a5a5] text-[10px]">
              <div className="flex h-full w-[260px] items-center gap-[2px] border-r border-[#a5a5a5] pl-2">
                <svg width="8" height="6" viewBox="0 0 8 6" fill="none" stroke="#555" aria-hidden="true"><path d="M.8.5h6.400L4 5.500z" /></svg>
                Layout: 1160
              </div>
              <div className="pl-[2px]">Filter: All Activities</div>
            </div>
            <div className="mr-[2px] flex min-h-0 flex-1 border-b border-r border-[#a5a5a5]">
              <div className="flex w-[678px] shrink-0 flex-col border-l border-[#a5a5a5]">
                <div className="flex min-h-0 flex-1">
                  <div className="min-w-0 flex-1 overflow-hidden"><ActivityTable /></div>
                  <VScroll />
                </div>
                <HScroll />
              </div>
              <div className="w-[5px] shrink-0 border-x border-[#a5a5a5] bg-white" />
              <div className="flex min-w-0 flex-1 flex-col">
                <div className="flex min-h-0 flex-1"><Gantt /><VScroll /></div>
                <HScroll end />
              </div>
            </div>
            <div className="h-[6px] shrink-0 border-b-2 border-[#999] bg-[#f5f5f5]" />
            <Details />
          </div>
        </main>
        <Rail groups={RIGHT} width="w-5" />
      </div>
      <footer className="flex h-[19px] shrink-0 gap-[3px] bg-[#f0f0f0] pl-[73px] pt-[3px] text-[10px] leading-[15px]">
        {STATUS.map(([t, w], i) => (
          <div key={i} className={"shrink-0 whitespace-nowrap border-l border-t border-[#a5a5a5] pl-px " + w}>{t}</div>
        ))}
      </footer>
    </div>
  );
}
